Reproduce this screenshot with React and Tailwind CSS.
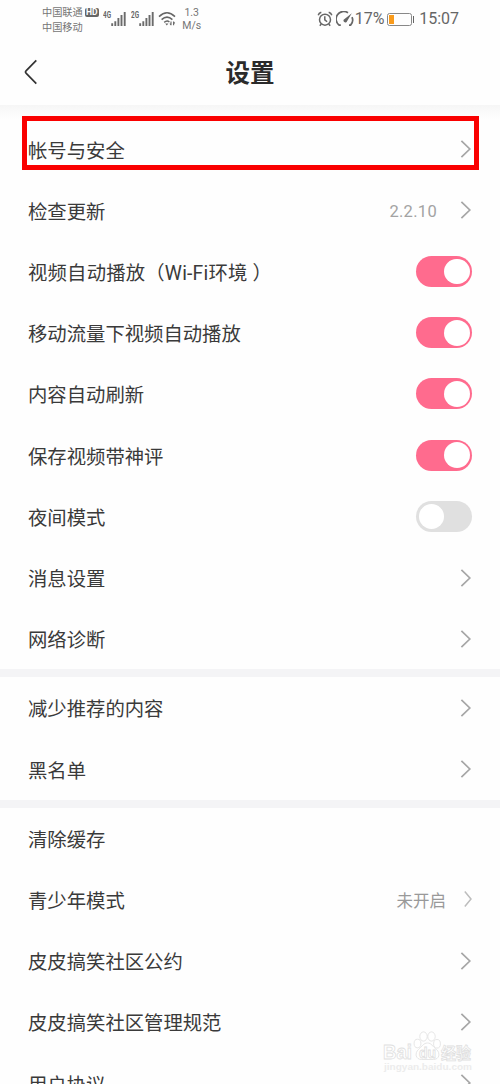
import React, { useState } from 'react';

const sections = [
  [
    { id: 'account', label: '帐号与安全', highlight: true },
    { id: 'update', label: '检查更新', value: '2.2.10' },
    { id: 'autoplayWifi', label: '视频自动播放（Wi-Fi环境 ）', toggle: true, wide: true },
    { id: 'autoplayMobile', label: '移动流量下视频自动播放', toggle: true },
    { id: 'autoRefresh', label: '内容自动刷新', toggle: true },
    { id: 'saveComment', label: '保存视频带神评', toggle: true },
    { id: 'nightMode', label: '夜间模式', toggle: true },
    { id: 'message', label: '消息设置' },
    { id: 'network', label: '网络诊断' },
  ],
  [
    { id: 'reduce', label: '减少推荐的内容' },
    { id: 'blacklist', label: '黑名单' },
  ],
  [
    { id: 'cache', label: '清除缓存', noArrow: true },
    { id: 'teen', label: '青少年模式', value: '未开启', small: true },
    { id: 'convention', label: '皮皮搞笑社区公约' },
    { id: 'rules', label: '皮皮搞笑社区管理规范' },
    { id: 'agreement', label: '用户协议' },
  ],
];

const Signal = ({ label }) => (
  <svg viewBox="0 0 24 16" className="h-4 w-6 shrink-0">
    <text x="0" y="7.200" fontSize="8.5" fontWeight="700" fontFamily="Roboto, sans-serif" fill="#666" textLength="8" lengthAdjust="spacingAndGlyphs">
      {label}
    </text>
    <path d="M9.2 12.300v2.7M12.3 10.200v4.800M15.4 7v8M18.5 4v11M21.7 1v14" stroke="#6b6b6b" strokeWidth="1.9" fill="none" />
  </svg>
);

const WifiIcon = () => (
  <svg viewBox="0 0 19 16" className="h-4 w-[19px] shrink-0" fill="none" stroke="#666" strokeWidth="1.5">
    <path d="M1 5.600Q9 -2 17 5.600M3.600 8.600Q9 3.600 14.400 8.600M6.200 11.400Q9 9 11.400 11" />
    <path d="M7.200 12.500h3.200L8.800 14.600z" fill="#666" stroke="none" />
    <path d="M13 10.600v3.700M15.600 10.600v3.700M12 12.500l1 1.500M16.800 12.300l-1.200-1.200" strokeWidth="1.1" />
  </svg>
);

const AlarmIcon = () => (
  <svg viewBox="0 0 16 16" className="h-4 w-4 shrink-0" fill="none" stroke="#666" strokeWidth="1.5">
    <circle cx="8" cy="8.7" r="5.5" />
    <path d="M1.2 4.2Q1.8 2 4.3 1.3M14.8 4.2Q14.2 2 11.7 1.3M7.8 5.3v3.5l2.3 2M4.3 13l-1.5 1.8M11.7 13l1.5 1.8" />
  </svg>
);

const GaugeIcon = () => (
  <svg viewBox="0 0 18 16" className="h-4 w-[18px] shrink-0" fill="none" stroke="#666" strokeWidth="1.7">
    <path d="M4.800 14.200H3.300A7.400 7.400 0 0 1 12 1.800M16 6.200a7.400 7.400 0 0 1-1.400 8H13" />
    <path d="M15.8 2.2 10.6 11a1.9 1.9 0 0 1-3-2.2z" fill="#666" stroke="none" />
  </svg>
);

const StatusBar = () => (
  <div className="flex h-[38px] items-start pl-[42px] text-[#757575]">
    <div className="mt-[5px] text-[10.2px] leading-[15px]">
      <div>中国联通</div>
      <div>中国移动</div>
    </div>
    <div className="ml-[2px] mt-[7.5px] flex h-[9px] w-[14px] items-center justify-center rounded-[2px] bg-[#666] text-[8.5px] font-bold leading-none text-white">
      HD
    </div>
    <div className="ml-[4px] mt-[11px] flex">
      <Signal label="4G" />
      <div className="w-[4.5px]" />
      <Signal label="2G" />
      <div className="w-[3px]" />
      <WifiIcon />
    </div>
    <div className="ml-[4.5px] mt-[7px] w-5 text-center text-[10.5px] leading-[12.5px]">
      <div>1.3</div>
      <div>M/s</div>
    </div>
    <div className="ml-auto flex h-[38px] items-center pr-[41px] text-[#666]">
      <AlarmIcon />
      <div className="w-[3px]" />
      <GaugeIcon />
      <span className="ml-px w-[32px] text-[16px]">17%</span>
      <div className="flex h-[13px] w-[25px] rounded-[2.5px] border border-[#888] p-px">
        <div className="w-[5px] bg-[#f99b1c]" />
      </div>
      <div className="ml-px h-[7px] w-[1.5px] bg-[#666]" />
      <span className="ml-[5px] text-[16px]">15:07</span>
    </div>
  </div>
);

const Arrow = ({ small }) =>
  small ? (
    <svg viewBox="0 0 12 20" className="h-5 w-3" fill="none" stroke="#bdbdbd" strokeWidth="1.5">
      <path d="M4.8 2.6 11 10l-6.200 7.400" />
    </svg>
  ) : (
    <svg viewBox="0 0 12 20" className="h-5 w-3" fill="none" stroke="#a6a6a6" strokeWidth="1.7">
      <path d="M1.4 1.8 9.8 10l-8.400 8.200" />
    </svg>
  );

const Toggle = ({ on, onClick }) => (
  <button
    onClick={onClick}
    className={`flex h-[31px] w-14 items-center rounded-full px-[2.5px] ${
      on ? 'justify-end bg-[#ff6b8e]' : 'justify-start bg-[#e0e0e0]'
    }`}
  >
    <span className="h-[25.5px] w-[25.5px] rounded-full bg-white" />
  </button>
);

const Watermark = () => (
  <div className="absolute bottom-[11px] right-[26px] w-[92px]">
    <svg viewBox="0 0 92 44" className="h-[44px] w-[92px]" fill="#fff" stroke="#e0e0e0" strokeWidth="0.8">
      <g fontFamily="'Liberation Sans', 'Noto Sans CJK SC', sans-serif" fontWeight="700">
        <text x="1" y="30" fontSize="20" textLength="29" lengthAdjust="spacingAndGlyphs">Bai</text>
        <text x="59" y="30" fontSize="16" textLength="30" lengthAdjust="spacingAndGlyphs">经验</text>
      </g>
      <ellipse cx="35.5" cy="14.500" rx="3.4" ry="4.3" />
      <ellipse cx="41.5" cy="7.500" rx="3.7" ry="4.6" />
      <ellipse cx="49.500" cy="7.500" rx="3.7" ry="4.6" />
      <ellipse cx="55" cy="14.800" rx="3.4" ry="4.3" />
      <path d="M45.500 14c-4 0-5.500 3.500-9 6.500-4 3.500-3 10 3 10h12c6 0 7-6.500 3-10-4-3-5-6.500-9-6.500z" />
      <text x="37" y="29" fontSize="14" fontWeight="700" fontFamily="'Liberation Sans', sans-serif" textLength="17" lengthAdjust="spacingAndGlyphs">du</text>
      <text x="2" y="41" fontSize="9.5" fill="#ececec" stroke="none" fontWeight="700" fontFamily="'Liberation Sans', sans-serif" textLength="88" lengthAdjust="spacingAndGlyphs">jingyan.baidu.com</text>
    </svg>
  </div>
);

const App = () => {
  const [enabled, setEnabled] = useState({
    autoplayWifi: true,
    autoplayMobile: true,
    autoRefresh: true,
    saveComment: true,
    nightMode: false,
  });

  const flip = (id) => setEnabled({ ...enabled, [id]: !enabled[id] });

  return (
    <div className="relative h-[1084px] w-[500px] overflow-hidden bg-[#fefefe] font-[Roboto,'Noto_Sans_CJK_SC',sans-serif] text-[#3a3a3a]">
      <StatusBar />

      {/* Header */}
      <header className="grid h-[67px] grid-cols-[60px_1fr_60px] items-center">
        <button className="pl-[23px]">
          <svg viewBox="0 0 16 26" className="h-[26px] w-4" fill="none" stroke="#333" strokeWidth="1.7">
            <path d="M13.3 1.3 3 11.8q-1.2 1.2 0 2.4l10.3 10.5" />
          </svg>
        </button>
        <h1 className="pt-[5px] text-center text-[24.5px] font-bold leading-none text-[#2b2b2b]">设置</h1>
      </header>
      <div className="h-[13.6px] bg-gradient-to-b from-[#f6f6f6] to-[#fefefe]" />

      {/* Settings list */}
      <main className="divide-y-8 divide-[#f4f4f6]">
        {sections.map((items, i) => (
          <section key={i}>
            {items.map((item) => (
              <div key={item.id} className="relative flex h-[61.2px] items-center pl-7 pr-7">
                <span className={`whitespace-nowrap pt-[4.4px] text-[19.35px] leading-none ${item.wide ? 'tracking-[0.2px]' : ''}`}>
                  {item.label}
                </span>
                <div className="ml-auto flex items-center">
                  {item.value && (
                    <span
                      className={
                        item.small
                          ? 'mr-[14px] pt-[5px] text-[16.5px] leading-none text-[#999]'
                          : 'mr-[23px] pt-[3px] text-[16.5px] leading-none tracking-[0.3px] text-[#a3a3a3]'
                      }
                    >
                      {item.value}
                    </span>
                  )}
                  {item.toggle ? (
                    <Toggle on={enabled[item.id]} onClick={() => flip(item.id)} />
                  ) : (
                    !item.noArrow && <Arrow small={item.small} />
                  )}
                </div>
                {item.highlight && (
                  <div className="absolute -top-[2.6px] left-[22px] h-[54px] w-[457px] border-[5.5px] border-[#fa0000]" />
                )}
              </div>
            ))}
          </section>
        ))}
      </main>

      <Watermark />
    </div>
  );
};

export default App;
